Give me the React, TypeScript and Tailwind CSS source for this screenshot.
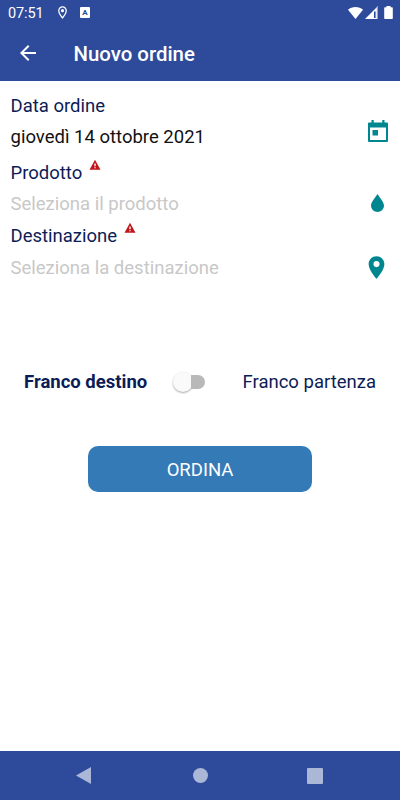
import React from "react";

type IconProps = { className?: string };

const WarningIcon = ({ className = "" }: IconProps) => (
  <svg viewBox="0 0 24 24" className={`-mt-[2px] h-3 w-3 fill-[#c0161a] ${className}`}>
    <path d="M1 21.5h22L12 1.5 1 21.5zm12.4-2.8h-2.8v-2.4h2.8v2.4zm0-4.2h-2.8V9h2.8v5.5z" />
  </svg>
);

const CalendarIcon = ({ className = "" }: IconProps) => (
  <svg viewBox="0 0 20 22" className={`h-[22px] w-5 fill-[#00868f] ${className}`}>
    <path d="M3.5 0h2.2v2.5h8.6V0h2.2v2.5H19a1 1 0 0 1 1 1V21a1 1 0 0 1-1 1H1a1 1 0 0 1-1-1V3.500a1 1 0 0 1 1-1h2.500zM2 7.500V20h16V7.500zM4.500 10h5.500v5.500H4.500z" />
  </svg>
);

const DropIcon = ({ className = "" }: IconProps) => (
  <svg viewBox="0 0 13 18" className={`h-[18px] w-[13px] fill-[#00868f] ${className}`}>
    <path d="M6.5 0C4.5 3.2 0 8 0 11.800a6.500 6.200 0 0 0 13 0C13 8 8.500 3.200 6.500 0z" />
  </svg>
);

const PlaceIcon = ({ className = "" }: IconProps) => (
  <svg viewBox="0 0 24 24" className={`size-[27px] fill-[#00868f] ${className}`}>
    <path d="M12 2C8.13 2 5 5.13 5 9c0 5.25 7 13 7 13s7-7.75 7-13c0-3.87-3.13-7-7-7zm0 9.7a2.700 2.700 0 0 1 0-5.400 2.700 2.700 0 0 1 0 5.400z" />
  </svg>
);

function StatusBar() {
  return (
    <div className="flex h-[25px] items-center pl-2 pr-[7px] text-white">
      <span className="w-[47px] pt-px text-[14.5px] leading-[25px] tracking-[-0.1px]">07:51</span>
      <svg viewBox="0 0 24 24" className="size-[15px] fill-white">
        <path d="M12 2C8.13 2 5 5.13 5 9c0 5.25 7 13 7 13s7-7.75 7-13c0-3.87-3.13-7-7-7zM7 9c0-2.76 2.24-5 5-5s5 2.24 5 5c0 2.88-2.88 7.19-5 9.88C9.92 16.21 7 11.85 7 9z" />
        <circle cx="12" cy="9" r="2.5" />
      </svg>
      <span className="ml-[10px] flex h-[11px] w-[10px] items-center justify-center rounded-[1px] bg-white text-[8px] font-bold leading-none text-[#2d4a9b]">
        A
      </span>
      <div className="ml-auto flex items-center">
        <svg viewBox="0 0 15 12" className="h-3 w-[15px] fill-white">
          <path d="M0 2.8C4-.9 11-.9 15 2.8L7.5 12z" />
        </svg>
        <svg viewBox="0 0 13 13" className="ml-[2px] h-[13px] w-[13px]">
          <path d="M0 13L13 0v13z" fill="#fff" />
          <path d="M9 5.5h1.6V12H9z" fill="#2d4a9b" />
          <path d="M11.8 1.2L13 0v13h-1.2z" fill="#93a4cf" />
        </svg>
        <svg viewBox="0 0 9 13" className="ml-[6px] h-[13px] w-[9px] fill-white">
          <path d="M2.5 0h4v1.2H8a.8.8 0 0 1 .8.8v10.2a.8.8 0 0 1-.8.8H1a.8.8 0 0 1-.8-.8V2a.8.8 0 0 1 .8-.8h1.5z" />
        </svg>
      </div>
    </div>
  );
}

function Header() {
  return (
    <div className="flex h-14 items-center pl-4 pt-[2px] text-white">
      <svg viewBox="0 0 24 24" className="mb-[3px] size-6 fill-white">
        <path d="M20 11H7.83l5.59-5.59L12 4l-8 8 8 8 1.41-1.41L7.83 13H20v-2z" />
      </svg>
      <h1 className="ml-[33.5px] text-[20.4px] font-medium leading-6">Nuovo ordine</h1>
    </div>
  );
}

function OrderForm() {
  return (
    <div className="pl-[10.5px] pr-[9px] pt-px text-[18.5px] leading-6">
      <div className="flex h-[31px] pt-3 text-[#0c1c56]">
        <span>Data ordine</span>
      </div>
      <div className="flex h-9 items-start justify-between pr-[3.5px] pt-3 text-[#111]">
        <span>giovedì 14 ottobre 2021</span>
        <CalendarIcon className="-mt-[5px]" />
      </div>
      <div className="flex h-[31px] pt-3 text-[#0c1c56]">
        <span className="w-[78.5px]">Prodotto</span>
        <WarningIcon />
      </div>
      <div className="flex h-8 items-start justify-between pr-[7px] pt-3 text-[#c8c8c8]">
        <span>Seleziona il prodotto</span>
        <DropIcon className="mt-[2px]" />
      </div>
      <div className="flex h-8 pt-3 text-[#0c1c56]">
        <span className="w-[113.5px]">Destinazione</span>
        <WarningIcon />
      </div>
      <div className="flex h-8 items-start justify-between pt-3 text-[#c8c8c8]">
        <span>Seleziona la destinazione</span>
        <PlaceIcon className="-mt-[2.5px] mr-[1px]" />
      </div>
    </div>
  );
}

export default function App() {
  return (
    <div className="flex h-[800px] w-[400px] flex-col overflow-hidden bg-white font-['Roboto',sans-serif]">
      <header className="h-[81px] shrink-0 bg-[#2d4a9b]">
        <StatusBar />
        <Header />
      </header>
      <main className="flex-1">
        <OrderForm />
        <div className="mt-[94px] flex h-6 items-center pl-6 text-[18.5px] leading-6 text-[#0c1c56]">
          <span className="w-[149px] whitespace-nowrap font-bold">Franco destino</span>
          <div className="flex w-[69.5px] items-center">
            <div className="size-5 rounded-full bg-[#fafafa] shadow-[0_1px_2px_rgba(0,0,0,0.35)]" />
            <div className="-ml-[2px] h-[14px] w-[14px] rounded-r-full bg-[#b9b9b9]" />
          </div>
          <span>Franco partenza</span>
        </div>
        <button className="mx-auto mt-[52px] block h-[46px] w-[224px] rounded-[10px] bg-[#337ab7] pt-[3px] text-[18.5px] text-white">
          ORDINA
        </button>
      </main>
      <nav className="flex h-[49px] shrink-0 items-center bg-[#2d4a9b] pl-[76px]">
        <svg viewBox="0 0 15 17" className="h-[17px] w-[15px] fill-[#abb7d7]">
          <path d="M0 8.5L15 0v17z" />
        </svg>
        <div className="ml-[101.5px] size-[15px] rounded-full bg-[#abb7d7]" />
        <div className="ml-[99.5px] size-4 rounded-[1px] bg-[#abb7d7]" />
      </nav>
    </div>
  );
}
